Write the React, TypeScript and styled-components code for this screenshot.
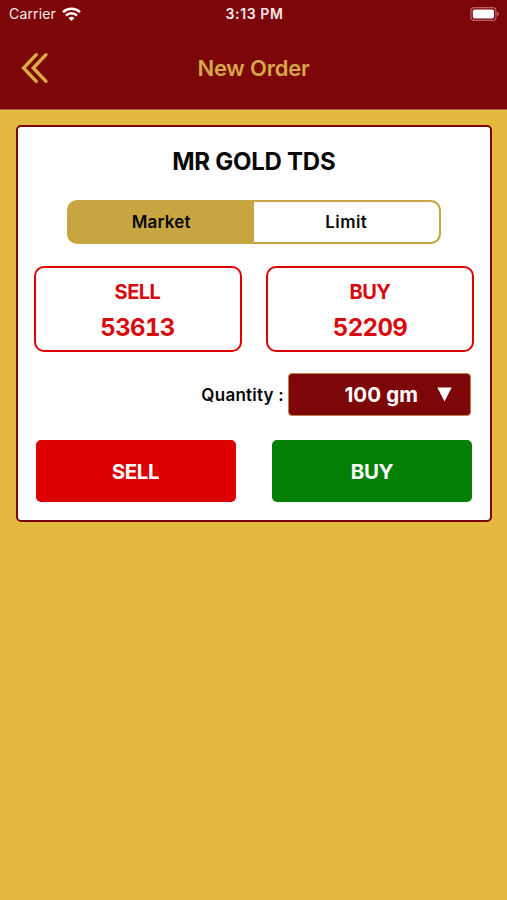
import React from "react";
import styled, { createGlobalStyle } from "styled-components";

const maroon = "#7d0609";
const gold = "#c7a641";
const red = "#dc0000";

const GlobalStyle = createGlobalStyle`
  * { box-sizing: border-box; }
  body { margin: 0; }
  button { font: inherit; border: 0; padding: 0; margin: 0; cursor: pointer; }
`;

const Screen = styled.div`
  min-height: 100vh;
  display: flex;
  flex-direction: column;
  background: #e4b93f;
  font-family: Inter, "Liberation Sans", sans-serif;
  font-weight: 600;
  color: #080808;
`;

const Header = styled.header`
  height: 110px;
  background: ${maroon};
  border-bottom: 1px solid #a5644a;
`;

const StatusBar = styled.div`
  height: 27px;
  padding: 0 7px 0 9px;
  display: grid;
  grid-template-columns: 1fr auto 1fr;
  align-items: center;
  color: #f8e9ea;
  font-size: 14px;
`;

const Carrier = styled.div`
  display: flex;
  align-items: center;
  gap: 6px;
  font-weight: 400;
  letter-spacing: 0.15px;
`;

const Clock = styled.div`
  letter-spacing: 0.6px;
`;

const BatterySlot = styled.div`
  display: flex;
  justify-content: flex-end;
`;

const NavBar = styled.nav`
  height: 81px;
  padding: 0 21px;
  display: grid;
  grid-template-columns: 28px 1fr 28px;
  align-items: center;
`;

const BackButton = styled.button`
  display: flex;
  background: none;
`;

const PageTitle = styled.h1`
  margin: 0;
  text-align: center;
  font-size: 22px;
  font-weight: 600;
  letter-spacing: -0.2px;
  color: #d3a748;
`;

const Card = styled.main`
  margin: 15px 15px 0 15.5px;
  height: 397px;
  padding: 0 16px;
  border: 2px solid ${maroon};
  border-radius: 5px;
  background: #fff;
  display: flex;
  flex-direction: column;
`;

const Instrument = styled.h2`
  margin: 20px 0 24px;
  text-align: center;
  font-size: 24px;
  line-height: 29px;
  font-weight: 650;
  letter-spacing: -0.25px;
`;

const Segments = styled.div`
  width: 374px;
  height: 44px;
  align-self: center;
  display: flex;
  border: 2px solid ${gold};
  border-radius: 10px;
  background: ${gold};
  overflow: hidden;
`;

const Segment = styled.button<{ $active?: boolean }>`
  flex: 1;
  background: ${(p) => (p.$active ? gold : "#fff")};
  border-radius: ${(p) => (p.$active ? "0" : "0 8px 8px 0")};
  font-size: 17px;
  letter-spacing: ${(p) => (p.$active ? "0.2px" : "0.45px")};
  color: #080808;
`;

const Prices = styled.div`
  margin-top: 22px;
  display: grid;
  grid-template-columns: 208px 208px;
  justify-content: space-between;
`;

const PriceBox = styled.div`
  height: 86px;
  border: 2px solid ${red};
  border-radius: 10px;
  display: flex;
  flex-direction: column;
  align-items: center;
  color: #d80a10;
`;

const Side = styled.span`
  margin-top: 12px;
  font-size: 20px;
  line-height: 24px;
  letter-spacing: -0.5px;
  font-weight: 650;
`;

const Price = styled.span`
  margin-top: 9px;
  font-size: 24px;
  line-height: 30px;
  font-weight: 700;
  letter-spacing: -0.65px;
  font-variant-numeric: tabular-nums;
`;

const QuantityRow = styled.div`
  margin: 21px 3px 0 0;
  display: flex;
  justify-content: flex-end;
  align-items: center;
  gap: 4px;
`;

const QuantityLabel = styled.label`
  font-size: 17px;
  letter-spacing: 0.24px;
`;

const Select = styled.button`
  width: 183px;
  height: 43px;
  border: 1px solid #bd8440;
  border-radius: 4px;
  background: ${maroon};
  color: #fff;
  display: flex;
  align-items: center;
  justify-content: flex-end;
  gap: 19px;
  padding-right: 18px;
  font-size: 20.5px;
  font-weight: 650;
  letter-spacing: 0.1px;
`;

const Actions = styled.div`
  margin: 24px 2px 0;
  display: grid;
  grid-template-columns: 200px 200px;
  justify-content: space-between;
`;

const Action = styled.button<{ $color: string }>`
  height: 62px;
  border-radius: 5px;
  background: ${(p) => p.$color};
  color: #fff;
  font-size: 20.5px;
  font-weight: 650;
  letter-spacing: -0.35px;
`;

const Wifi = () => (
  <svg width="19" height="14" viewBox="0 0 19 14" fill="none" stroke="#fff" strokeWidth="2.5">
    <path d="M1 5.1C5.8 0.6 13.2 0.6 18 5.1" />
    <path d="M4 8.5C7.1 5.5 11.9 5.5 15 8.5" />
    <path d="M6.5 10.9C8.2 9.2 10.8 9.2 12.5 10.9L9.5 13.9Z" fill="#fff" stroke="none" />
  </svg>
);

const Battery = () => (
  <svg width="30" height="14" viewBox="0 0 30 14">
    <rect x="0.9" y="0.7" width="25" height="12.6" rx="3.4" fill="none" stroke="#b4676a" strokeWidth="1.2" />
    <rect x="2.8" y="2.5" width="21.2" height="9" rx="1.8" fill="#fff" />
    <path d="M27 4.8C29.4 5.5 29.4 8.5 27 9.2Z" fill="#b4676a" />
  </svg>
);

const BackIcon = () => (
  <svg width="28" height="32" viewBox="0 0 28 32" fill="none" stroke="#d9ac43" strokeWidth="3.4" strokeLinecap="round">
    <path d="M15.3 2.7L2.6 16L15.3 29.3" />
    <path d="M25 2.7L12.3 16L25 29.3" />
  </svg>
);

const DownTriangle = () => (
  <svg width="15" height="15" viewBox="0 0 15 15">
    <path d="M0.3 0.6H14.7L7.5 14.5Z" fill="#fff" />
  </svg>
);

const quotes = [
  { side: "SELL", price: "53613", color: red },
  { side: "BUY", price: "52209", color: "#038003" },
];

export default function App() {
  return (
    <Screen>
      <GlobalStyle />
      <Header>
        <StatusBar>
          <Carrier>
            Carrier <Wifi />
          </Carrier>
          <Clock>3:13 PM</Clock>
          <BatterySlot>
            <Battery />
          </BatterySlot>
        </StatusBar>
        <NavBar>
          <BackButton aria-label="Back">
            <BackIcon />
          </BackButton>
          <PageTitle>New Order</PageTitle>
        </NavBar>
      </Header>
      <Card>
        <Instrument>MR GOLD TDS</Instrument>
        <Segments>
          <Segment $active>Market</Segment>
          <Segment>Limit</Segment>
        </Segments>
        <Prices>
          {quotes.map((q) => (
            <PriceBox key={q.side}>
              <Side>{q.side}</Side>
              <Price>{q.price}</Price>
            </PriceBox>
          ))}
        </Prices>
        <QuantityRow>
          <QuantityLabel>Quantity :</QuantityLabel>
          <Select>
            100 gm <DownTriangle />
          </Select>
        </QuantityRow>
        <Actions>
          {quotes.map((q) => (
            <Action key={q.side} $color={q.color}>
              {q.side}
            </Action>
          ))}
        </Actions>
      </Card>
    </Screen>
  );
}
